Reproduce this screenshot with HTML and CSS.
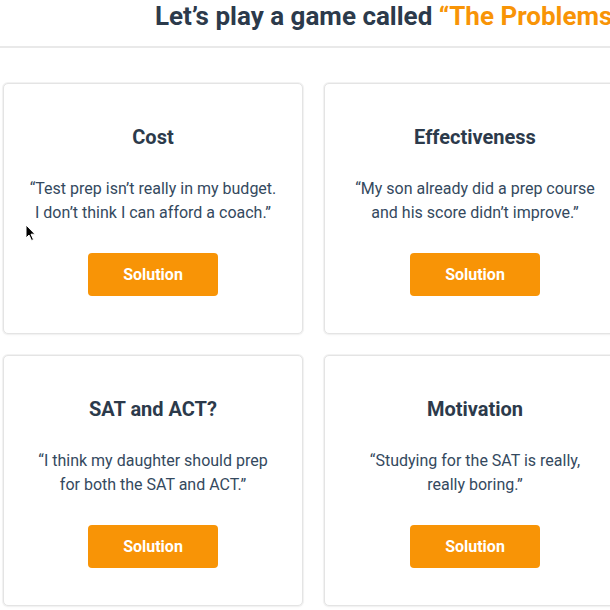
FILE: index.html
```html
<!DOCTYPE html>
<html>
<head>
<meta charset="utf-8">
<link rel="stylesheet" href="styles.css">
</head>
<body>
<header class="header">
  <h1 class="title">Let’s play a game called <span class="accent">“The Problems</span></h1>
</header>
<main class="grid">
  <section class="card">
    <h3 class="card-title">Cost</h3>
    <p class="card-text">“Test prep isn’t really in my budget.<br>I don’t think I can afford a coach.”</p>
    <button class="btn">Solution</button>
  </section>
  <section class="card">
    <h3 class="card-title">Effectiveness</h3>
    <p class="card-text">“My son already did a prep course<br>and his score didn’t improve.”</p>
    <button class="btn">Solution</button>
  </section>
  <section class="card">
    <h3 class="card-title">SAT and ACT?</h3>
    <p class="card-text">“I think my daughter should prep<br>for both the SAT and ACT.”</p>
    <button class="btn">Solution</button>
  </section>
  <section class="card">
    <h3 class="card-title">Motivation</h3>
    <p class="card-text">“Studying for the SAT is really,<br>really boring.”</p>
    <button class="btn">Solution</button>
  </section>
</main>
<svg class="cursor" width="12" height="18" viewBox="0 0 12 18"><path d="M1 1 L1 14 L4 11 L6.5 16.5 L8.5 15.6 L6 10.2 L10 10.2 Z" fill="#000" stroke="#fff" stroke-width="1"/></svg>
</body>
</html>
```
FILE: styles.css
```css
html, body {
  margin: 0;
  padding: 0;
  background: #fff;
  overflow: hidden;
  width: 610px;
  height: 610px;
  font-family: Roboto, "Liberation Sans", sans-serif;
  color: #2c3e50;
}
.header {
  box-sizing: border-box;
  height: 48px;
  padding-top: 1px;
  border-bottom: 2px solid #e9e9e9;
  display: flex;
  align-items: flex-start;
}
.title {
  margin: 0;
  padding-left: 155px;
  font-size: 26px;
  line-height: 30px;
  font-weight: 700;
  white-space: nowrap;
  color: #2c3a4b;
}
.accent {
  color: #f89406;
}
.grid {
  display: grid;
  grid-template-columns: 300px 302px;
  gap: 21px;
  padding: 35px 0 0 3px;
}
.card {
  box-sizing: border-box;
  height: 251px;
  border: 1px solid #e4e4e4;
  border-radius: 5px;
  box-shadow: 0 0 0 1px #f2f2f2, 0 1px 3px rgba(0,0,0,0.04);
  background: #fff;
  display: flex;
  flex-direction: column;
  align-items: center;
  padding-top: 41px;
}
.card-title {
  margin: 0;
  font-size: 20px;
  line-height: 24px;
  font-weight: 700;
  color: #2c3a4b;
}
.card-text {
  margin: 28px 0 0;
  font-size: 16px;
  line-height: 24px;
  text-align: center;
  white-space: nowrap;
  color: #34495e;
}
.btn {
  margin-top: 28px;
  width: 130px;
  height: 43px;
  border: none;
  border-radius: 4px;
  background: #f89406;
  color: #fff;
  font-family: Roboto, "Liberation Sans", sans-serif;
  font-size: 16px;
  font-weight: 700;
}
.cursor {
  position: absolute;
  left: 25px;
  top: 224px;
}
```
